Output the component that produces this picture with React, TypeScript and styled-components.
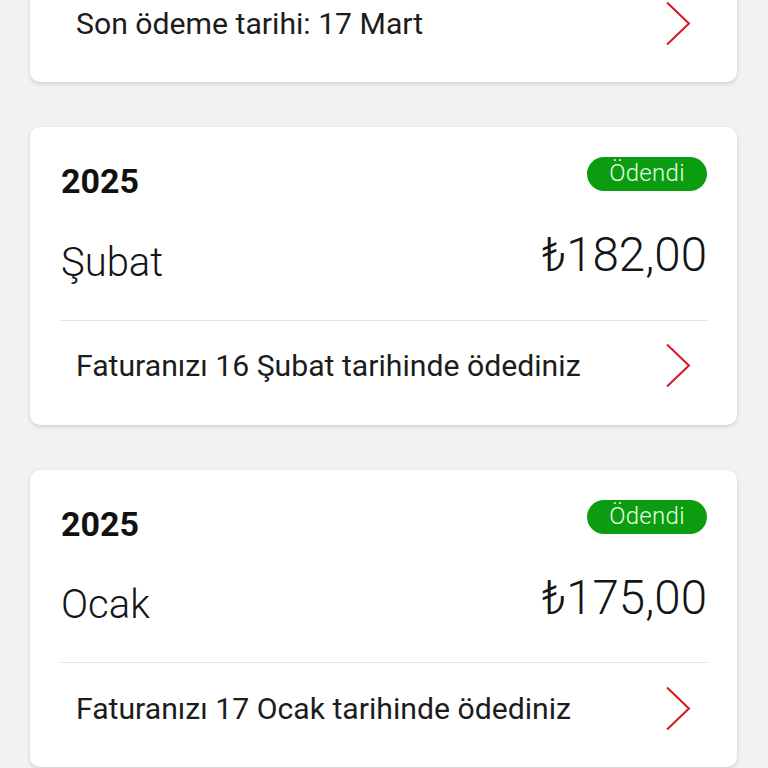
import React from "react";
import styled, { createGlobalStyle } from "styled-components";

const Global = createGlobalStyle`
  html, body { margin: 0; padding: 0; background: #f2f2f2; }
  body { font-family: Roboto, "Noto Sans", "Liberation Sans", sans-serif; -webkit-font-smoothing: antialiased; }
  * { box-sizing: border-box; }
`;

const Viewport = styled.div`
  width: 768px;
  height: 768px;
  overflow: hidden;
  background: #f2f2f2;
`;

const List = styled.div`
  display: flex;
  flex-direction: column;
  gap: 45px;
  padding: 0 31px 0 30px;
  margin-top: -22px;
`;

const Card = styled.div<{ $compact?: boolean }>`
  background: #fff;
  border-radius: 10px;
  box-shadow: 0 2px 4px rgba(0, 0, 0, 0.13), 0 0 1px rgba(0, 0, 0, 0.08);
  padding: ${(p) => (p.$compact ? "0 30px 14px 31px" : "30px 30px 14px 31px")};
  display: flex;
  flex-direction: column;
`;

const TopRow = styled.div`
  display: flex;
  justify-content: space-between;
  align-items: flex-start;
`;

const Year = styled.div`
  margin-top: 4px;
  font-size: 34px;
  line-height: 40px;
  font-weight: 700;
  color: #111;
`;

const Badge = styled.div`
  width: 120px;
  height: 34px;
  border-radius: 17px;
  background: #0c9c10;
  color: #e6ffe6;
  font-size: 24px;
  font-weight: 300;
  line-height: 32px;
  text-align: center;
  letter-spacing: 0.3px;
`;

const MonthRow = styled.div`
  display: flex;
  justify-content: space-between;
  align-items: flex-end;
  margin-top: 31px;
`;

const Month = styled.div`
  font-size: 40px;
  line-height: 1;
  font-weight: 300;
  color: #151515;
`;

const Amount = styled.div`
  font-size: 47.5px;
  line-height: 1;
  font-weight: 300;
  color: #151515;
  margin-bottom: 3px;
`;

const Divider = styled.div`
  height: 1px;
  background: #e3e3e3;
  margin-top: 37px;
`;

const FooterRow = styled.div`
  height: 90px;
  display: flex;
  align-items: center;
  justify-content: space-between;
  padding: 0 16px 0 15px;
`;

const FooterText = styled.div`
  font-size: 30.2px;
  color: #1c1c1c;
  font-weight: 400;
`;

const Chevron = () => (
  <svg width="26" height="45" viewBox="0 0 26 45" fill="none">
    <polyline points="2,1.5 24,22.5 2,43.5" stroke="#d9151f" strokeWidth="2" strokeLinejoin="miter" />
  </svg>
);

type Bill = { year: string; month: string; amount: string; note: string };

const bills: Bill[] = [
  { year: "2025", month: "Şubat", amount: "₺182,00", note: "Faturanızı 16 Şubat tarihinde ödediniz" },
  { year: "2025", month: "Ocak", amount: "₺175,00", note: "Faturanızı 17 Ocak tarihinde ödediniz" },
];

export default function App() {
  return (
    <Viewport>
      <Global />
      <List>
        <Card $compact>
          <FooterRow>
            <FooterText>Son ödeme tarihi: 17 Mart</FooterText>
            <Chevron />
          </FooterRow>
        </Card>
        {bills.map((b) => (
          <Card key={b.month}>
            <TopRow>
              <Year>{b.year}</Year>
              <Badge>Ödendi</Badge>
            </TopRow>
            <MonthRow>
              <Month>{b.month}</Month>
              <Amount>{b.amount}</Amount>
            </MonthRow>
            <Divider />
            <FooterRow>
              <FooterText>{b.note}</FooterText>
              <Chevron />
            </FooterRow>
          </Card>
        ))}
      </List>
    </Viewport>
  );
}
